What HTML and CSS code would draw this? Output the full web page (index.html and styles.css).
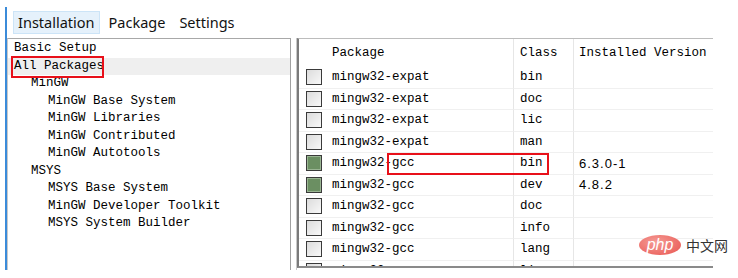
FILE: index.html
```html
<!DOCTYPE html>
<html>
<head>
<meta charset="utf-8">
<link rel="stylesheet" href="styles.css">
</head>
<body>
<div class="window">
  <div class="menubar">
    <span class="menu-item active">Installation</span>
    <span class="menu-item">Package</span>
    <span class="menu-item">Settings</span>
  </div>
  <div class="panes">
    <div class="tree">
      <div class="node l0">Basic Setup</div>
      <div class="node l0 selected">All Packages<span class="mark mark-tree"></span></div>
      <div class="node l1">MinGW</div>
      <div class="node l2">MinGW Base System</div>
      <div class="node l2">MinGW Libraries</div>
      <div class="node l2">MinGW Contributed</div>
      <div class="node l2">MinGW Autotools</div>
      <div class="node l1">MSYS</div>
      <div class="node l2">MSYS Base System</div>
      <div class="node l2">MinGW Developer Toolkit</div>
      <div class="node l2">MSYS System Builder</div>
    </div>
    <div class="splitter"></div>
    <div class="list">
      <div class="grid">
        <div class="cell head c0"></div>
        <div class="cell head c1">Package</div>
        <div class="cell head c2">Class</div>
        <div class="cell head c3">Installed Version</div>

        <div class="cell c0"><span class="box"></span></div><div class="cell c1">mingw32-expat</div><div class="cell c2">bin</div><div class="cell c3"></div>
        <div class="cell c0"><span class="box"></span></div><div class="cell c1">mingw32-expat</div><div class="cell c2">doc</div><div class="cell c3"></div>
        <div class="cell c0"><span class="box"></span></div><div class="cell c1">mingw32-expat</div><div class="cell c2">lic</div><div class="cell c3"></div>
        <div class="cell c0"><span class="box"></span></div><div class="cell c1">mingw32-expat</div><div class="cell c2">man</div><div class="cell c3"></div>
        <div class="cell c0"><span class="box on"></span></div><div class="cell c1">mingw32-gcc</div><div class="cell c2">bin</div><div class="cell c3 ver">6.3.0-1</div>
        <div class="cell c0"><span class="box on"></span></div><div class="cell c1">mingw32-gcc</div><div class="cell c2">dev</div><div class="cell c3 ver">4.8.2</div>
        <div class="cell c0"><span class="box"></span></div><div class="cell c1">mingw32-gcc</div><div class="cell c2">doc</div><div class="cell c3"></div>
        <div class="cell c0"><span class="box"></span></div><div class="cell c1">mingw32-gcc</div><div class="cell c2">info</div><div class="cell c3"></div>
        <div class="cell c0"><span class="box"></span></div><div class="cell c1">mingw32-gcc</div><div class="cell c2">lang</div><div class="cell c3"></div>
        <div class="cell c0"><span class="box"></span></div><div class="cell c1">mingw32-gcc</div><div class="cell c2">lic</div><div class="cell c3"></div>
      </div>
      <span class="mark mark-row"></span>
    </div>
  </div>
</div>
<div class="watermark"><span class="php">php</span><span class="cn">中文网</span></div>
</body>
</html>
```
FILE: styles.css
```css
html, body {
  margin: 0;
  padding: 0;
  background: #ffffff;
}
body {
  width: 738px;
  height: 278px;
  overflow: hidden;
  position: relative;
  font-family: "Liberation Mono", "DejaVu Sans Mono", monospace;
}
.window {
  margin: 7px 0 0 5px;
  width: 706px;
  height: 263px;
  border-left: 2px solid #3b8bd9;
  display: flex;
  flex-direction: column;
}
.menubar {
  display: flex;
  align-items: center;
  gap: 4px;
  height: 31px;
  padding-left: 6px;
  font-family: "Noto Sans", "Open Sans", sans-serif;
  font-size: 14.5px;
  color: #111;
}
.menu-item {
  padding: 0 4px;
  line-height: 21px;
  border: 1px solid transparent;
}
.menu-item.active {
  background: #e5f1fb;
  border-color: #cce4f7;
}
.panes {
  display: flex;
  height: 232px;
}
.tree {
  position: relative;
  width: 282px;
  border-top: 1px solid #a8a8a8;
  border-left: 1px solid #c8c8c8;
  border-right: 1px solid #a0a0a0;
  padding-top: 1px;
  font-size: 12.5px;
  color: #000;
}
.node {
  height: 17.5px;
  line-height: 17.5px;
  white-space: pre;
}
.node.l0 { padding-left: 6px; }
.node.l1 { padding-left: 23px; }
.node.l2 { padding-left: 40px; }
.node.selected {
  background: #efefef;
  position: relative;
}
.mark {
  position: absolute;
  border: 2px solid #e8101a;
  box-sizing: border-box;
}
.mark-tree {
  left: 3px;
  top: -2px;
  width: 93px;
  height: 22px;
}
.splitter {
  width: 5px;
  border-right: 1px solid #c8c8c8;
}
.list {
  position: relative;
  flex: 1;
  border-left: 2px solid #7a7a7a;
  border-top: 1px solid #bcbcbc;
  border-bottom: 2px solid #8a8a8a;
  height: 227px;
  overflow: hidden;
}
.grid {
  display: grid;
  grid-template-columns: 27px 187px 60px 1fr;
  grid-auto-rows: 21.5px;
  grid-template-rows: 28px;
  font-size: 12.5px;
  color: #000;
}
.cell {
  display: flex;
  align-items: center;
  border-bottom: 1px solid #f0f0f0;
  white-space: pre;
}
.cell.head { border-bottom: none; }
.c1 { padding-left: 6px; }
.c2 { padding-left: 6px; border-left: 1px solid #e6e6e6; }
.c3 { padding-left: 5px; border-left: 1px solid #e6e6e6; }
.ver { font-family: "Liberation Sans", sans-serif; font-size: 13px; letter-spacing: 1px; }
.box {
  display: block;
  width: 14px;
  height: 14px;
  margin-left: 7px;
  border: 1px solid #3a3a3a;
  background: linear-gradient(135deg, #dcdcdc, #f8f8f8);
}
.box.on {
  background: #6b8f62;
  box-shadow: inset 0 0 0 1px #9ab593;
}
.mark-row {
  left: 88px;
  top: 114px;
  width: 162px;
  height: 22px;
}
.watermark {
  position: absolute;
  left: 639px;
  top: 235px;
  display: flex;
  align-items: center;
  gap: 5px;
}
.php {
  display: inline-block;
  width: 42px;
  height: 20px;
  border-radius: 50%;
  background: radial-gradient(ellipse at 40% 35%, #f59b95, #e8544f);
  color: #fff;
  font-family: "Liberation Sans", sans-serif;
  font-style: italic;
  font-size: 16px;
  line-height: 19px;
  text-align: center;
}
.cn {
  font-family: "Noto Sans CJK SC", sans-serif;
  font-size: 14px;
  color: #333;
}
```
